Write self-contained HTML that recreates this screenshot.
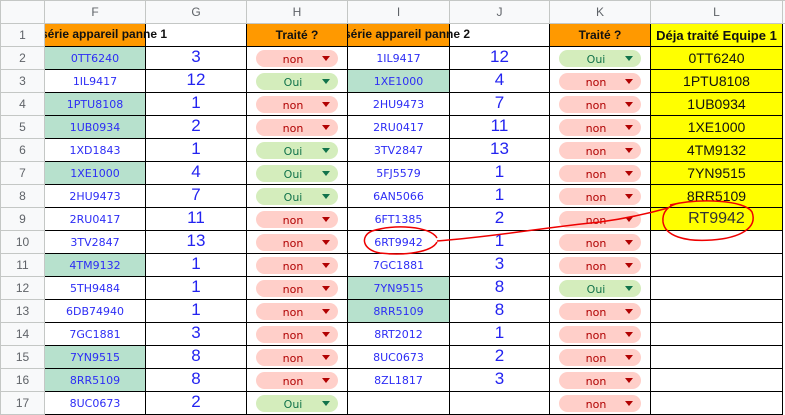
<!DOCTYPE html>
<html><head><meta charset="utf-8"><style>
body{margin:0;width:785px;height:415px;overflow:hidden;background:#fff;font-family:"Liberation Sans",Arial,sans-serif;position:relative}
table{border-collapse:collapse;table-layout:fixed;position:absolute;left:0;top:0;width:785px}
td{padding:0;text-align:center;overflow:hidden;white-space:nowrap;border:1px solid #000;font-size:11px;color:#2d2df5;font-family:"DejaVu Sans",sans-serif}
td.h{background:#f8f9fa;border:1px solid #c4c7c5;color:#5f6368;font-size:12px;font-family:"Liberation Sans",sans-serif}
td.rh{background:#f8f9fa;border:1px solid #c4c7c5;color:#5f6368;font-size:12px;font-family:"Liberation Sans",sans-serif}
tr td{height:22px}
td.g{background:#b7e1cd}
td.n{font-size:17px;color:#2323f0;vertical-align:top;line-height:20px;font-family:"Liberation Sans",sans-serif}
td.o{background:#ff9900;font-weight:bold;color:#111;font-size:12px;font-family:"Liberation Sans",sans-serif}
td.y{background:#ffff00;color:#111;font-size:14px;font-family:"Liberation Sans",sans-serif}
td.e{border-right:none;border-top:none;border-bottom:none}
.c{display:inline-block;width:82px;height:17px;border-radius:9px;position:relative;text-align:center;font-size:11px;line-height:19px;vertical-align:middle;font-family:"DejaVu Sans",sans-serif}
.c span{position:relative;left:-4px}
.c i{position:absolute;right:8px;top:6px;width:0;height:0;border-left:4px solid transparent;border-right:4px solid transparent}
.non{background:#ffcfc9;color:#b10202}.non i{border-top:5px solid #b10202}
.oui{background:#d4edbc;color:#11734b}.oui i{border-top:5px solid #11734b}
.ov{position:absolute;top:23px;height:22px;line-height:22px;font-weight:bold;font-size:12px;color:#111;overflow:hidden;white-space:nowrap}
</style></head><body>
<table>
<colgroup><col style="width:44px"><col style="width:101px"><col style="width:101px"><col style="width:101px"><col style="width:102px"><col style="width:100px"><col style="width:101px"><col style="width:132px"><col style="width:3px"></colgroup>
<tr><td class="h"></td><td class="h">F</td><td class="h">G</td><td class="h">H</td><td class="h">I</td><td class="h">J</td><td class="h">K</td><td class="h">L</td><td class="h"></td></tr>
<tr><td class="rh">1</td><td class="o"></td><td></td><td class="o">Traité ?</td><td class="o"></td><td></td><td class="o">Traité ?</td><td class="y" style="font-weight:bold;font-size:13px">Déja traité Equipe 1</td><td class="e"></td></tr>
<tr><td class="rh">2</td><td class="g">0TT6240</td><td class="n">3</td><td><span class="c non"><span>non</span><i></i></span></td><td>1IL9417</td><td class="n">12</td><td><span class="c oui"><span>Oui</span><i></i></span></td><td class="y">0TT6240</td><td class="e"></td></tr>
<tr><td class="rh">3</td><td>1IL9417</td><td class="n">12</td><td><span class="c oui"><span>Oui</span><i></i></span></td><td class="g">1XE1000</td><td class="n">4</td><td><span class="c non"><span>non</span><i></i></span></td><td class="y">1PTU8108</td><td class="e"></td></tr>
<tr><td class="rh">4</td><td class="g">1PTU8108</td><td class="n">1</td><td><span class="c non"><span>non</span><i></i></span></td><td>2HU9473</td><td class="n">7</td><td><span class="c non"><span>non</span><i></i></span></td><td class="y">1UB0934</td><td class="e"></td></tr>
<tr><td class="rh">5</td><td class="g">1UB0934</td><td class="n">2</td><td><span class="c non"><span>non</span><i></i></span></td><td>2RU0417</td><td class="n">11</td><td><span class="c non"><span>non</span><i></i></span></td><td class="y">1XE1000</td><td class="e"></td></tr>
<tr><td class="rh">6</td><td>1XD1843</td><td class="n">1</td><td><span class="c oui"><span>Oui</span><i></i></span></td><td>3TV2847</td><td class="n">13</td><td><span class="c non"><span>non</span><i></i></span></td><td class="y">4TM9132</td><td class="e"></td></tr>
<tr><td class="rh">7</td><td class="g">1XE1000</td><td class="n">4</td><td><span class="c oui"><span>Oui</span><i></i></span></td><td>5FJ5579</td><td class="n">1</td><td><span class="c non"><span>non</span><i></i></span></td><td class="y">7YN9515</td><td class="e"></td></tr>
<tr><td class="rh">8</td><td>2HU9473</td><td class="n">7</td><td><span class="c oui"><span>Oui</span><i></i></span></td><td>6AN5066</td><td class="n">1</td><td><span class="c non"><span>non</span><i></i></span></td><td class="y">8RR5109</td><td class="e"></td></tr>
<tr><td class="rh">9</td><td>2RU0417</td><td class="n">11</td><td><span class="c non"><span>non</span><i></i></span></td><td>6FT1385</td><td class="n">2</td><td><span class="c non"><span>non</span><i></i></span></td><td class="y" style="font-size:16px;color:#333">RT9942</td><td class="e"></td></tr>
<tr><td class="rh">10</td><td>3TV2847</td><td class="n">13</td><td><span class="c non"><span>non</span><i></i></span></td><td>6RT9942</td><td class="n">1</td><td><span class="c non"><span>non</span><i></i></span></td><td></td><td class="e"></td></tr>
<tr><td class="rh">11</td><td class="g">4TM9132</td><td class="n">1</td><td><span class="c non"><span>non</span><i></i></span></td><td>7GC1881</td><td class="n">3</td><td><span class="c non"><span>non</span><i></i></span></td><td></td><td class="e"></td></tr>
<tr><td class="rh">12</td><td>5TH9484</td><td class="n">1</td><td><span class="c non"><span>non</span><i></i></span></td><td class="g">7YN9515</td><td class="n">8</td><td><span class="c oui"><span>Oui</span><i></i></span></td><td></td><td class="e"></td></tr>
<tr><td class="rh">13</td><td>6DB74940</td><td class="n">1</td><td><span class="c non"><span>non</span><i></i></span></td><td class="g">8RR5109</td><td class="n">8</td><td><span class="c non"><span>non</span><i></i></span></td><td></td><td class="e"></td></tr>
<tr><td class="rh">14</td><td>7GC1881</td><td class="n">3</td><td><span class="c non"><span>non</span><i></i></span></td><td>8RT2012</td><td class="n">1</td><td><span class="c non"><span>non</span><i></i></span></td><td></td><td class="e"></td></tr>
<tr><td class="rh">15</td><td class="g">7YN9515</td><td class="n">8</td><td><span class="c non"><span>non</span><i></i></span></td><td>8UC0673</td><td class="n">2</td><td><span class="c non"><span>non</span><i></i></span></td><td></td><td class="e"></td></tr>
<tr><td class="rh">16</td><td class="g">8RR5109</td><td class="n">8</td><td><span class="c non"><span>non</span><i></i></span></td><td>8ZL1817</td><td class="n">3</td><td><span class="c non"><span>non</span><i></i></span></td><td></td><td class="e"></td></tr>
<tr><td class="rh">17</td><td>8UC0673</td><td class="n">2</td><td><span class="c oui"><span>Oui</span><i></i></span></td><td></td><td></td><td><span class="c non"><span>non</span><i></i></span></td><td></td><td class="e"></td></tr>
</table>
<div class="ov" style="left:45px;width:150px"><span style="margin-left:-4px">série appareil panne 1</span></div>
<div class="ov" style="left:348px;width:150px"><span style="margin-left:-4px">série appareil panne 2</span></div>
<svg style="position:absolute;left:0;top:0" width="785" height="415">
<g fill="none" stroke="#e00" stroke-width="1.5">
<path d="M437,238 C430,226 395,224 372,231 C360,236 362,250 380,253 C405,256 432,252 437,242"/>
<path d="M437,241 C500,236 540,228 600,222 C630,218 650,213 668,208"/>
<path d="M670,205 C700,198 745,200 752,212 C758,228 740,238 712,240 C685,242 665,236 663,222 C662,212 668,205 680,203"/>
</g></svg>
</body></html>
